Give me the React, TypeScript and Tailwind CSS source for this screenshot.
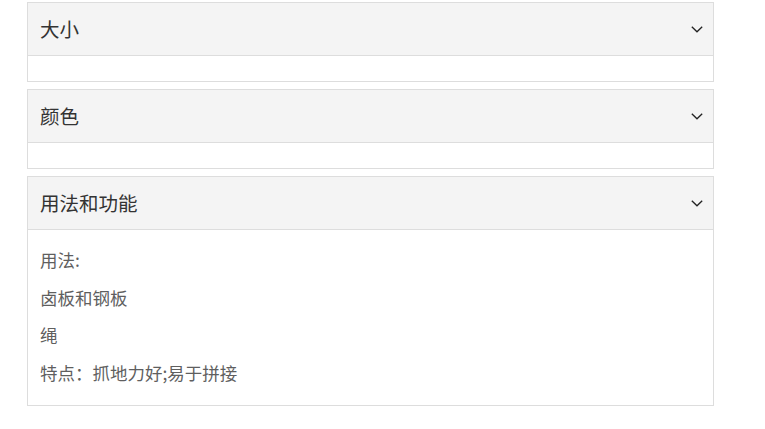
import React from "react";

const Chevron = () => (
  <svg width="12" height="7" viewBox="0 0 12 7" fill="none" className="shrink-0">
    <path d="M0.8 0.8 L6 5.8 L11.2 0.8" stroke="#222" strokeWidth="1.3" />
  </svg>
);

function Card({ title, children }: { title: string; children?: React.ReactNode }) {
  return (
    <div className="border border-[#dddddd] bg-white">
      <div className="flex h-[53px] items-center justify-between border-b border-[#dddddd] bg-[#f4f4f4] pl-[12px] pr-[10px]">
        <span className="text-[19.5px] text-[#333333]">{title}</span>
        <Chevron />
      </div>
      {children ? children : <div className="h-[25px]" />}
    </div>
  );
}

export default function App() {
  return (
    <div
      className="min-h-screen bg-white pt-[2px]"
      style={{ fontFamily: '"Noto Sans CJK SC", "Noto Sans", sans-serif' }}
    >
      <div className="ml-[27px] flex w-[687px] flex-col gap-[7px]">
        <Card title="大小" />
        <Card title="颜色" />
        <Card title="用法和功能">
          <div className="flex flex-col gap-[13.5px] px-[12px] pb-[20px] pt-[18px] text-[17.5px] leading-[24px] text-[#5f5f5f]">
            <p>用法:</p>
            <p>卤板和钢板</p>
            <p>绳</p>
            <p>特点：抓地力好;易于拼接</p>
          </div>
        </Card>
      </div>
    </div>
  );
}
